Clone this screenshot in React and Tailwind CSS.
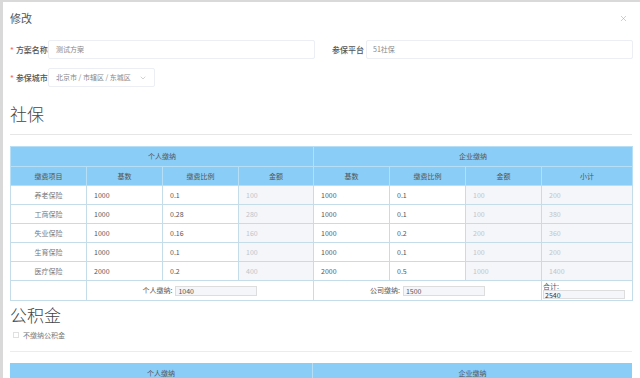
import { ChevronDown, X } from "lucide-react";

const font = { fontFamily: '"Noto Sans CJK SC", "Noto Sans", sans-serif' };

const rows = [
  { name: "养老保险", pb: "1000", pr: "0.1", pa: "100", cb: "1000", cr: "0.1", ca: "100", sub: "200" },
  { name: "工商保险", pb: "1000", pr: "0.28", pa: "280", cb: "1000", cr: "0.1", ca: "100", sub: "380" },
  { name: "失业保险", pb: "1000", pr: "0.16", pa: "160", cb: "1000", cr: "0.2", ca: "200", sub: "360" },
  { name: "生育保险", pb: "1000", pr: "0.1", pa: "100", cb: "1000", cr: "0.1", ca: "100", sub: "200" },
  { name: "医疗保险", pb: "2000", pr: "0.2", pa: "400", cb: "2000", cr: "0.5", ca: "1000", sub: "1400" },
];

function Field({ label, required, children, labelW = "w-[38px]" }) {
  return (
    <div className="flex items-center">
      <div className={`${labelW} text-right pr-[5px] text-[8px] font-medium text-[#555] whitespace-nowrap`}>
        {required && <span className="text-[#f56c6c] mr-[2px]">*</span>}
        {label}
      </div>
      {children}
    </div>
  );
}

function Cell({ children, disabled }) {
  return (
    <td className={`border border-[#c5dde8] h-[19px] px-[7px] text-[7px] ${disabled ? "bg-[#f4f6f9] text-[#c0c4cc]" : "bg-white text-[#555]"}`}>
      {children}
    </td>
  );
}

export default function App() {
  return (
    <div className="w-[640px] h-[378px] overflow-hidden bg-white border-t-2 border-l-[3px] border-[#d9d9d9] relative" style={font}>
      <div className="px-[7px]">
        <div className="flex items-center justify-between h-[32px] pt-[1px]">
          <span className="text-[11px] text-[#555]">修改</span>
          <X className="w-[9px] h-[9px] text-[#aaa] mr-[5px]" strokeWidth={1.5} />
        </div>

        <div className="flex mt-[6px] gap-[0px]">
          <div className="w-[305px]">
            <Field label="方案名称" required>
              <div className="flex-1 h-[19px] border border-[#ebeef5] rounded-[2px] flex items-center px-[7px] text-[7px] text-[#888]">测试方案</div>
            </Field>
          </div>
          <div className="flex-1 ml-[17px]">
            <Field label="参保平台" labelW="w-[34px]">
              <div className="flex-1 h-[19px] border border-[#ebeef5] rounded-[2px] flex items-center px-[6px] text-[7px] text-[#888]">51社保</div>
            </Field>
          </div>
        </div>

        <div className="mt-[9px]">
          <Field label="参保城市" required>
            <div className="w-[107px] h-[19px] border border-[#ebeef5] rounded-[2px] flex items-center justify-between px-[7px] text-[7px] text-[#888]">
              <span>北京市 / 市辖区 / 东城区</span>
              <ChevronDown className="w-[8px] h-[8px] text-[#bbb]" />
            </div>
          </Field>
        </div>

        <div className="mt-[15px] text-[17px] font-light text-[#444] leading-[24px]">社保</div>
        <div className="mt-[8px] border-t border-[#e6e6e6] w-[622px]" />

        <table className="mt-[11px] w-[622px] table-fixed border-collapse text-center">
          <colgroup>
            <col className="w-[76px]" />
            <col className="w-[76px]" />
            <col className="w-[76px]" />
            <col className="w-[75px]" />
            <col className="w-[76px]" />
            <col className="w-[76px]" />
            <col className="w-[76px]" />
            <col className="w-[91px]" />
          </colgroup>
          <thead>
            <tr className="bg-[#8acdf6] text-[7px] text-[#555]">
              <th colSpan={4} className="h-[20px] font-normal border border-[#b6def5]">个人缴纳</th>
              <th colSpan={4} className="font-normal border border-[#b6def5]">企业缴纳</th>
            </tr>
            <tr className="bg-[#8acdf6] text-[7px] text-[#555]">
              {["缴费项目", "基数", "缴费比例", "金额", "基数", "缴费比例", "金额", "小计"].map((h, i) => (
                <th key={i} className="h-[19px] font-normal border border-[#b6def5]">{h}</th>
              ))}
            </tr>
          </thead>
          <tbody className="text-left">
            {rows.map((r) => (
              <tr key={r.name}>
                <td className="border border-[#c5dde8] h-[19px] text-center text-[7px] text-[#777]">{r.name}</td>
                <Cell>{r.pb}</Cell>
                <Cell>{r.pr}</Cell>
                <Cell disabled>{r.pa}</Cell>
                <Cell>{r.cb}</Cell>
                <Cell>{r.cr}</Cell>
                <Cell disabled>{r.ca}</Cell>
                <Cell disabled>{r.sub}</Cell>
              </tr>
            ))}
            <tr>
              <td className="border border-[#c5dde8] h-[20px]" />
              <td colSpan={3} className="border border-[#c5dde8]">
                <div className="flex items-center justify-center text-[7px] text-[#555]">
                  <span className="mr-[3px]">个人缴纳:</span>
                  <div className="w-[82px] h-[10px] border border-[#ddd] bg-[#f4f6f9] text-[#555] px-[2px] leading-[9px]">1040</div>
                </div>
              </td>
              <td colSpan={3} className="border border-[#c5dde8]">
                <div className="flex items-center justify-center text-[7px] text-[#555]">
                  <span className="mr-[3px]">公司缴纳:</span>
                  <div className="w-[82px] h-[10px] border border-[#ddd] bg-[#f4f6f9] text-[#555] px-[2px] leading-[9px]">1500</div>
                </div>
              </td>
              <td className="border border-[#c5dde8] px-[1px] text-[7px] text-[#555] leading-[8px]">
                <div>合计:</div>
                <div className="w-[82px] h-[9px] border border-[#ddd] bg-[#f4f6f9] text-[#333] px-[1px] leading-[8px]">2540</div>
              </td>
            </tr>
          </tbody>
        </table>

        <div className="mt-[2px] text-[17px] font-light text-[#444] leading-[24px]">公积金</div>
        <div className="flex items-center mt-[3px] ml-[3px] text-[7px] text-[#777]">
          <span className="w-[6px] h-[6px] border border-[#e0e0e0] mr-[4px] bg-white" />
          不缴纳公积金
        </div>
        <div className="mt-[10px] border-t border-[#ececec] w-[622px]" />

        <div className="mt-[11px] w-[622px] h-[20px] bg-[#8acdf6] flex text-[7px] text-[#555]">
          <div className="w-[303px] text-center pt-[5px] border-r border-[#b6def5]">个人缴纳</div>
          <div className="flex-1 text-center pt-[5px]">企业缴纳</div>
        </div>
      </div>
    </div>
  );
}
